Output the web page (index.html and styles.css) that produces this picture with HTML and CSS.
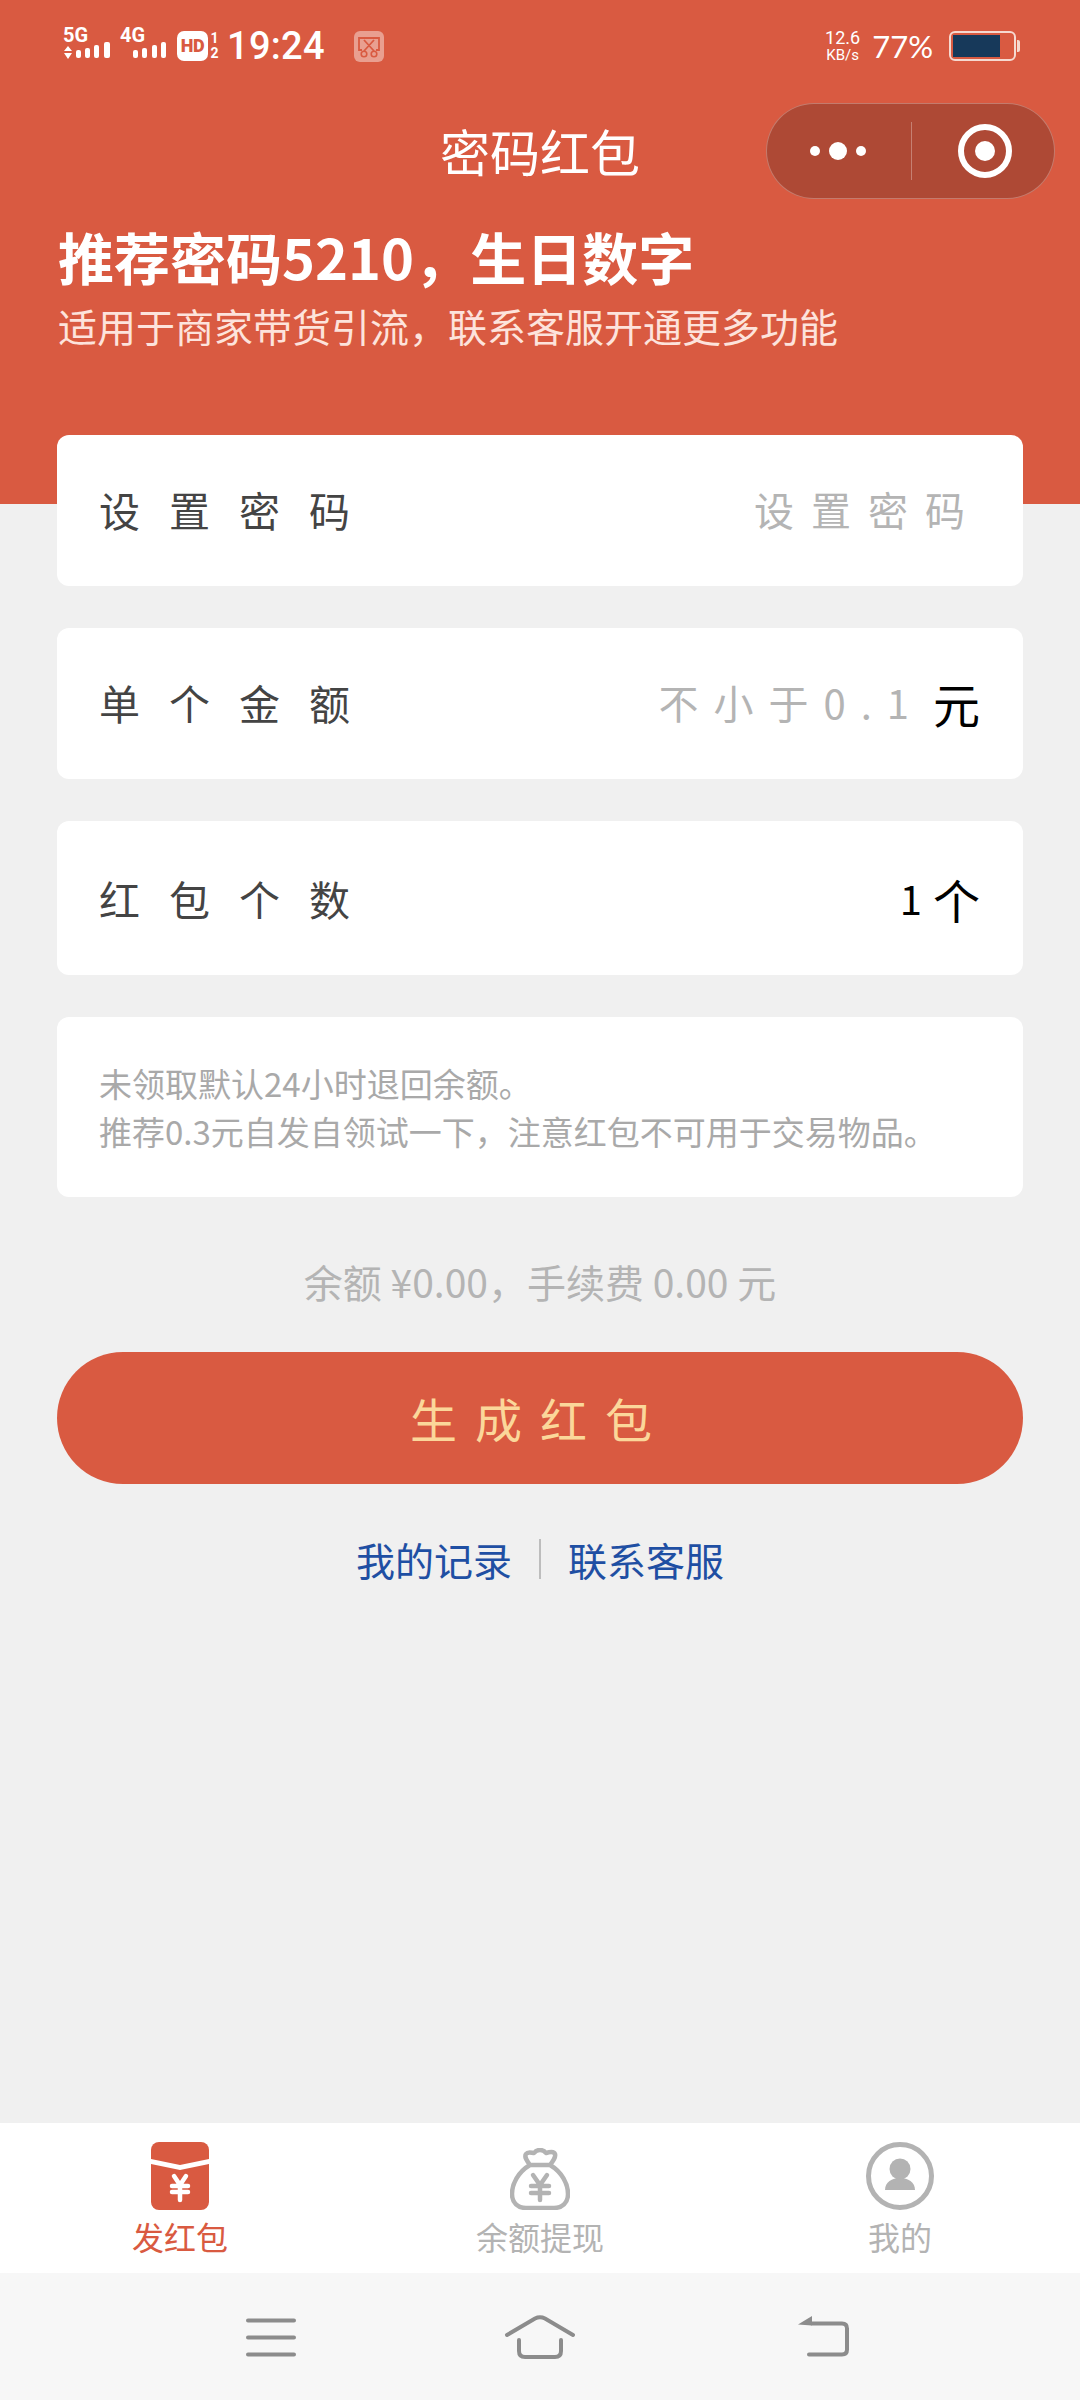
FILE: index.html
```html
<!DOCTYPE html>
<html lang="zh-CN">
<head>
<meta charset="utf-8">
<title>密码红包</title>
<link rel="stylesheet" href="styles.css">
</head>
<body>
<div class="page">
  <header class="header">
    <div class="status">
      <svg class="sig" width="50" height="46" viewBox="0 -2 50 46">
        <text x="1" y="17" class="sig-text">5G</text>
        <path d="M2 26l4-5 4 5zM2 28h8l-4 6z" fill="#fff"/>
        <rect x="14" y="25" width="5" height="8" rx="2" fill="#fff"/>
        <rect x="23" y="23" width="5" height="10" rx="2" fill="#fff"/>
        <rect x="32" y="20" width="5" height="13" rx="2" fill="#fff"/>
        <rect x="42" y="17" width="6" height="16" rx="2" fill="#fff"/>
      </svg>
      <svg class="sig sig2" width="48" height="46" viewBox="0 -2 48 46">
        <text x="2" y="17" class="sig-text">4G</text>
        <rect x="15" y="25" width="5" height="8" rx="2" fill="#fff"/>
        <rect x="24" y="23" width="5" height="10" rx="2" fill="#fff"/>
        <rect x="34" y="20" width="5" height="13" rx="2" fill="#fff"/>
        <rect x="43" y="17" width="5" height="16" rx="2" fill="#fff"/>
      </svg>
      <span class="hd">HD</span>
      <span class="sim"><span>1</span><span>2</span></span>
      <span class="time">19:24</span>
      <svg class="shot" width="30" height="31" viewBox="0 0 30 31">
        <rect width="30" height="31" rx="6" fill="#fff" fill-opacity=".42"/>
        <path d="M8 19H5V7h20v12h-3M10 9l10 11M20 9L10 20" fill="none" stroke="#d95a41" stroke-width="1.8"/>
        <circle cx="10" cy="23" r="2.8" fill="none" stroke="#d95a41" stroke-width="1.6"/>
        <circle cx="20" cy="23" r="2.8" fill="none" stroke="#d95a41" stroke-width="1.6"/>
      </svg>
      <span class="grow"></span>
      <span class="speed"><span class="speed-num">12.6</span><span class="speed-unit">KB/s</span></span>
      <span class="pct">77%</span>
      <span class="battery"><span class="battery-fill"></span></span>
      <span class="battery-nub"></span>
    </div>
    <h1 class="title">密码红包</h1>
    <div class="capsule">
      <span class="capsule-part capsule-part-dots">
        <i class="dot"></i><i class="dot dot-big"></i><i class="dot"></i>
      </span>
      <span class="capsule-line"></span>
      <span class="capsule-part capsule-part-target">
        <svg width="54" height="54" viewBox="0 0 54 54">
          <circle cx="27" cy="27" r="24" fill="none" stroke="#fff" stroke-width="6"/>
          <circle cx="27" cy="27" r="10" fill="#fff"/>
        </svg>
      </span>
    </div>
    <p class="headline">推荐密码5210，生日数字</p>
    <p class="sub">适用于商家带货引流，联系客服开通更多功能</p>
  </header>

  <main class="form">
    <div class="row row-a">
      <span class="label">设置密码</span>
      <span class="ph ph-pw">设置密码</span>
    </div>
    <div class="row row-b">
      <span class="label">单个金额</span>
      <span class="value"><span class="ph ph-num">不小于0.1</span><span class="unit">元</span></span>
    </div>
    <div class="row row-c">
      <span class="label">红包个数</span>
      <span class="value"><span class="count">1</span><span class="unit">个</span></span>
    </div>
    <div class="note">
      <p>未领取默认24小时退回余额。</p>
      <p>推荐0.3元自发自领试一下，注意红包不可用于交易物品。</p>
    </div>
    <p class="balance">余额 ¥0.00，手续费 0.00 元</p>
    <button class="submit" type="button">生成红包</button>
    <div class="links">
      <a class="link">我的记录</a>
      <span class="link-line"></span>
      <a class="link">联系客服</a>
    </div>
  </main>

  <nav class="tabs">
    <div class="tab tab-on">
      <svg width="58" height="68" viewBox="0 0 58 68">
        <path d="M8 0h42a8 8 0 0 1 8 8v9L29 23 0 17V8a8 8 0 0 1 8-8z" fill="#d95a41"/>
        <path d="M0 22l29 6 29-6v38a8 8 0 0 1-8 8H8a8 8 0 0 1-8-8z" fill="#d95a41"/>
        <path d="M23 34l6 9 6-9M21 44h16M21 50h16M29 43v15" fill="none" stroke="#fff" stroke-width="4.5" stroke-linecap="round"/>
      </svg>
      <span>发红包</span>
    </div>
    <div class="tab">
      <svg width="60" height="62" viewBox="0 0 60 62">
        <path d="M20 17c-3-4-6-8-4-11 2-3 6-1 8-1 3-4 9-4 12 0 3-1 8-2 9 1 1 3-2 7-5 11M20 17h20M20 17C8 24 2 36 2 46c0 9 6 14 14 14h28c8 0 14-5 14-14 0-10-6-22-18-29" fill="none" stroke="#b3b3b3" stroke-width="4.5" stroke-linejoin="round"/>
        <path d="M23 27l7 10 7-10M21 38h18M21 45h18M30 37v15" fill="none" stroke="#b3b3b3" stroke-width="4.5" stroke-linecap="round"/>
      </svg>
      <span>余额提现</span>
    </div>
    <div class="tab">
      <svg width="68" height="68" viewBox="0 0 68 68">
        <circle cx="34" cy="34" r="31.5" fill="none" stroke="#b3b3b3" stroke-width="5"/>
        <circle cx="34" cy="27" r="10.5" fill="#b3b3b3"/>
        <path d="M19 48c0-8 7-12 15-12s15 4 15 12z" fill="#b3b3b3"/>
      </svg>
      <span>我的</span>
    </div>
  </nav>

  <footer class="sysnav">
    <svg width="50" height="42" viewBox="0 0 50 42">
      <path d="M2 4.5h46M2 21.5h46M2 38.5h46" stroke="#8c8c8c" stroke-width="4" stroke-linecap="round"/>
    </svg>
    <svg width="72" height="44" viewBox="0 0 72 44">
      <path d="M3 20L31 3.5q5-2.5 10 0L69 20M15 25v11q0 6 6 6h30q6 0 6-6V25" fill="none" stroke="#8c8c8c" stroke-width="4" stroke-linecap="round"/>
    </svg>
    <svg class="back" width="51" height="42" viewBox="0 0 51 42">
      <path d="M14 7.5h30q5 0 5 5v21q0 5-5 5H11" fill="none" stroke="#8c8c8c" stroke-width="4" stroke-linecap="round"/>
      <path d="M14 0L0 8.5l14 1z" fill="#8c8c8c"/>
    </svg>
  </footer>
</div>
</body>
</html>
```
FILE: styles.css
```css
* { box-sizing: border-box; }
html, body { margin: 0; padding: 0; }
body { font-family: "Noto Sans CJK SC", "Noto Sans", sans-serif; }
p, h1 { margin: 0; font-weight: 400; }

.page {
  width: 1080px;
  height: 2400px;
  background: #f0f0f0;
  display: flex;
  flex-direction: column;
  overflow: hidden;
}

.header {
  position: relative;
  height: 504px;
  flex: none;
  background: #d95a41;
  color: #fff;
  padding: 27px 0 0 58px;
}

.status {
  display: flex;
  align-items: center;
  height: 38px;
  padding-right: 60px;
  color: #fff;
}
.sig { flex: none; margin-left: 4px; }
.sig2 { margin-left: 6px; }
.sig-text { font: 700 20px Roboto, sans-serif; fill: #fff; }
.hd {
  margin-left: 11px;
  width: 31px;
  height: 30px;
  background: #fff;
  border-radius: 7px;
  color: #d95a41;
  font: 900 18px/30px Roboto, sans-serif;
  letter-spacing: -0.5px;
  text-align: center;
  flex: none;
}
.sim {
  display: flex;
  flex-direction: column;
  margin-left: 1px;
  width: 11px;
  font: 700 14px/15px Roboto, sans-serif;
  text-align: center;
}
.time {
  margin-left: 7px;
  font: 500 38px/38px Roboto, sans-serif;
  letter-spacing: 0.3px;
}
.shot { flex: none; margin-left: 29px; }
.grow { flex: 1; }
.speed {
  display: flex;
  flex-direction: column;
  align-items: center;
  font-family: Roboto, sans-serif;
}
.speed-num { font-size: 18px; line-height: 18px; }
.speed-unit { font-size: 15px; line-height: 16px; }
.pct {
  margin-left: 12px;
  font: 400 31px/38px Lato, sans-serif;
}
.battery {
  margin-left: 16px;
  width: 67px;
  height: 30px;
  border: 2px solid #f6d9d0;
  border-radius: 6px;
  padding: 2px;
  flex: none;
  display: flex;
}
.battery-fill { width: 47px; background: #17395a; }
.battery-nub {
  width: 3px;
  height: 12px;
  margin-left: 1px;
  background: #f6d9d0;
  border-radius: 0 2px 2px 0;
  flex: none;
}

.title {
  margin: 50px 0 0 -58px;
  font-size: 50px;
  line-height: 70px;
  text-align: center;
}
.capsule {
  position: absolute;
  left: 766px;
  top: 103px;
  width: 289px;
  height: 96px;
  border-radius: 48px;
  background: #ae4935;
  border: 1.5px solid rgba(255, 255, 255, .28);
  display: flex;
  align-items: center;
}
.capsule-part {
  display: flex;
  align-items: center;
  justify-content: center;
  gap: 9px;
}
.capsule-part-dots { width: 144px; padding-right: 3px; flex: none; }
.capsule-part-target { flex: 1; padding-left: 4px; }
.capsule-line { width: 1px; height: 58px; background: rgba(255, 255, 255, .3); flex: none; }
.dot { display: block; width: 10px; height: 10px; border-radius: 50%; background: #fff; }
.dot-big { width: 18px; height: 18px; }

.headline {
  margin-top: 34px;
  font-size: 56px;
  line-height: 74px;
  font-weight: 700;
  white-space: nowrap;
}
.sub {
  margin-top: 4px;
  font-size: 39px;
  line-height: 56px;
  color: #fde3dc;
}

.form {
  margin: -69px 57px 0;
  display: flex;
  flex-direction: column;
  position: relative;
}
.row {
  background: #fff;
  border-radius: 12px;
  display: flex;
  align-items: center;
  justify-content: space-between;
  padding: 0 43px 0 44px;
  margin-bottom: 42px;
}
.row-a { height: 151px; padding-bottom: 3px; }
.row-b { height: 151px; padding-bottom: 3px; }
.row-c { height: 154px; }
.label {
  font-size: 41px;
  letter-spacing: 29px;
  color: #444;
  margin-left: -2px;
  white-space: nowrap;
}
.ph {
  font-size: 40px;
  color: #b4b4b4;
  white-space: nowrap;
}
.ph-pw { letter-spacing: 17px; margin-right: -2px; }
.ph-num { letter-spacing: 15px; margin-right: 9px; }
.value { display: flex; align-items: center; }
.unit { font-size: 47px; color: #000; }
.count { font-size: 40px; color: #000; margin-right: 11px; }

.note {
  background: #fff;
  border-radius: 12px;
  height: 180px;
  padding: 42px 42px 0;
  font-size: 33px;
  line-height: 48px;
  color: #a9a9a9;
}

.balance {
  margin-top: 56px;
  font-size: 39px;
  line-height: 56px;
  color: #b4b4b4;
  text-align: center;
}
.submit {
  margin-top: 43px;
  height: 132px;
  border: 0;
  border-radius: 66px;
  background: #d95a41;
  color: #fbd79a;
  font: 400 47px "Noto Sans CJK SC", sans-serif;
  letter-spacing: 18px;
  padding: 0 0 2px;
}
.links {
  margin-top: 47px;
  display: flex;
  justify-content: center;
  align-items: center;
  gap: 27px;
}
.link { font-size: 39px; line-height: 56px; color: #1f4fa3; }
.link-line { width: 2px; height: 40px; background: #bdbdbd; }

.tabs {
  margin-top: auto;
  height: 150px;
  flex: none;
  background: #fff;
  display: grid;
  grid-template-columns: repeat(3, 1fr);
}
.tab {
  display: flex;
  flex-direction: column;
  align-items: center;
  justify-content: flex-end;
  padding-bottom: 14px;
  color: #b3b3b3;
  font-size: 32px;
  line-height: 46px;
}
.tab svg { display: block; margin-bottom: 3px; }
.tab-on { color: #d95a41; }

.sysnav {
  height: 127px;
  flex: none;
  background: #f7f7f7;
  display: flex;
  align-items: center;
  padding-left: 246px;
  gap: 208px;
}
.sysnav svg { display: block; flex: none; }
.sysnav .back { margin-left: 14px; }
```
